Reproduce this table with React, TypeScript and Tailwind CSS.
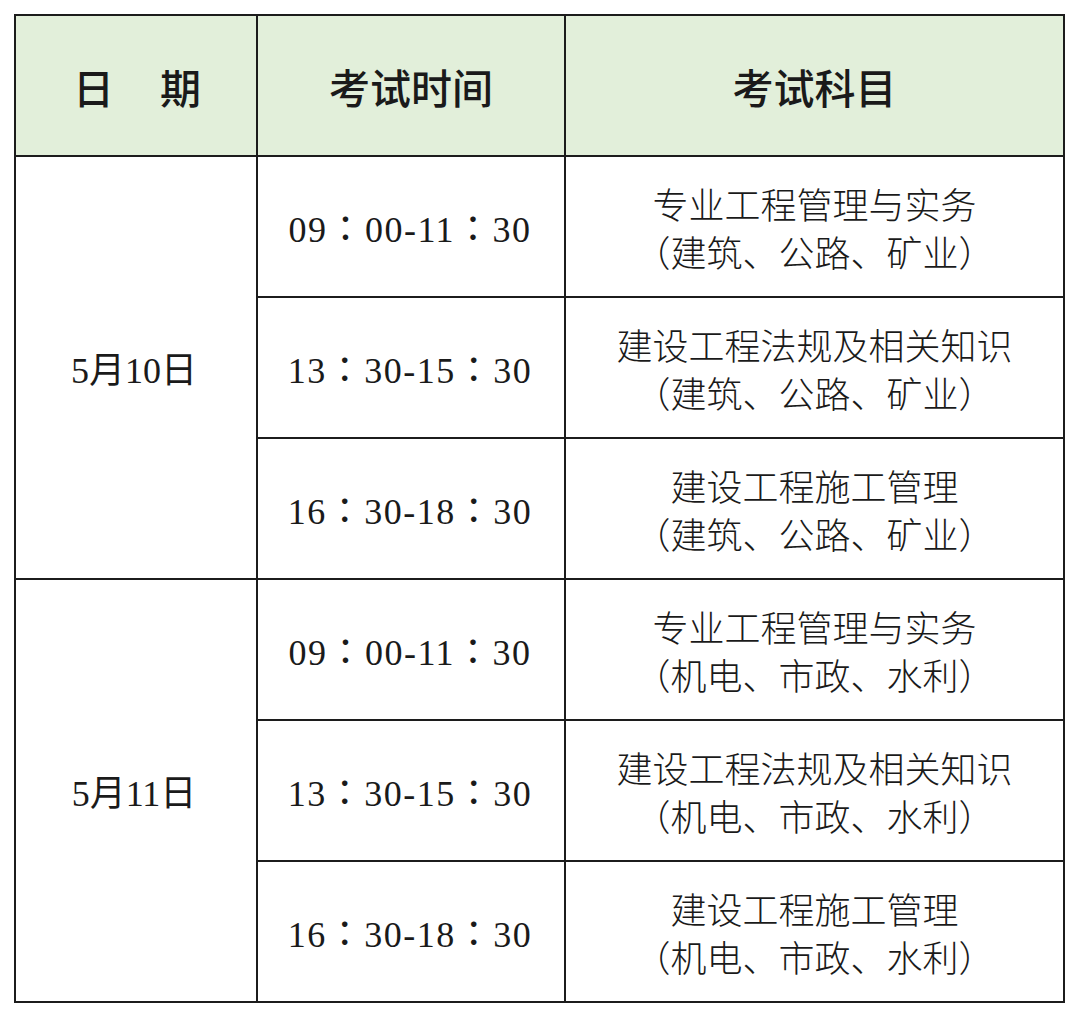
import React from 'react'

const serif = {
  fontFamily: '"Liberation Serif", "Times New Roman", Tinos, "DejaVu Serif", "Noto Sans CJK TC", serif',
}

interface Slot {
  time: string
  subject: string
}

const days: { date: string; group: string; slots: Slot[] }[] = [
  {
    date: '5月10日',
    group: '建筑、公路、矿业',
    slots: [
      { time: '09：00-11：30', subject: '专业工程管理与实务' },
      { time: '13：30-15：30', subject: '建设工程法规及相关知识' },
      { time: '16：30-18：30', subject: '建设工程施工管理' },
    ],
  },
  {
    date: '5月11日',
    group: '机电、市政、水利',
    slots: [
      { time: '09：00-11：30', subject: '专业工程管理与实务' },
      { time: '13：30-15：30', subject: '建设工程法规及相关知识' },
      { time: '16：30-18：30', subject: '建设工程施工管理' },
    ],
  },
]

export default function App() {
  return (
    <div className="w-[1080px] h-[1018px] bg-white pt-[14px] pl-[14px]">
      <div className="grid w-[1051px] grid-cols-[240px_306px_497px] auto-rows-[139px] gap-[2px] bg-[#1c1c1c] p-[2px] text-[#1a1a1a]">
        {/* header */}
        <div className="bg-[#e2efda] flex items-center justify-center pt-[2px] pl-[2px] text-[41px] font-medium font-['Noto_Sans_CJK_SC',sans-serif]">
          <span>日</span>
          <span className="ml-[46px]">期</span>
        </div>
        <div className="bg-[#e2efda] flex items-center justify-center pt-[2px] text-[41px] font-medium font-['Noto_Sans_CJK_SC',sans-serif]">
          考试时间
        </div>
        <div className="bg-[#e2efda] flex items-center justify-center pt-[2px] text-[41px] font-medium font-['Noto_Sans_CJK_SC',sans-serif]">
          考试科目
        </div>

        {days.map(day => (
          <React.Fragment key={day.date}>
            <div
              className="row-span-3 bg-white flex items-center justify-center pt-[6px] pr-[4px] text-[36px]"
              style={serif}
            >
              {day.date}
            </div>
            {day.slots.map((slot, i) => (
              <React.Fragment key={i}>
                <div
                  className="col-start-2 bg-white flex items-center justify-center pt-[6px] pr-[2px] text-[36px] tracking-[1.5px]"
                  style={serif}
                >
                  {slot.time}
                </div>
                <div className="bg-white flex flex-col items-center justify-center text-[36px] leading-[48px] font-['Noto_Sans_CJK_SC',sans-serif] font-light">
                  <span>{slot.subject}</span>
                  <span>
                    <span className="font-['Noto_Sans_CJK_TC',sans-serif]">（</span>
                    {day.group}
                    <span className="font-['Noto_Sans_CJK_TC',sans-serif]">）</span>
                  </span>
                </div>
              </React.Fragment>
            ))}
          </React.Fragment>
        ))}
      </div>
    </div>
  )
}
